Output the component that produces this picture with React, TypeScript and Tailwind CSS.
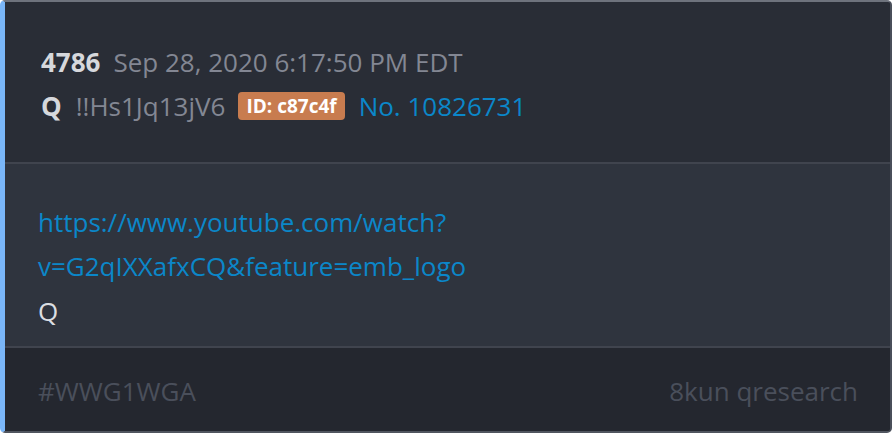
import React from "react";

export default function App() {
  return (
    <div className="w-[894px] h-[434px] bg-white" style={{ fontFamily: '"Open Sans", "Noto Sans", sans-serif' }}>
      <div className="w-[892px] h-[433px] flex flex-col rounded-[5px] overflow-hidden border-t-2 border-t-[#6e737d] border-r-2 border-r-[#4a4f5a] border-b-2 border-b-[#50555f] border-l-[5px] border-l-[#7ab6f8] bg-[#292d36]">
        <div className="bg-[#292d36] pl-[36px] pr-[32px] pt-[38px] pb-[34px] text-[26px] leading-[44px]">
          <div className="flex items-baseline">
            <span className="font-bold text-[#d6d8dc]">4786</span>
            <span className="ml-[13px] text-[#838793]">Sep 28, 2020 6:17:50 PM EDT</span>
          </div>
          <div className="flex items-center">
            <span className="font-bold text-[#d6d8dc]">Q</span>
            <span className="ml-[14px] text-[#838793]">!!Hs1Jq13jV6</span>
            <span className="ml-[13px] bg-[#c87c4f] text-white font-bold text-[19px] leading-[28px] px-[8px] rounded-[4px]">ID: c87c4f</span>
            <span className="ml-[14px] text-[#0b87c9]">No. 10826731</span>
          </div>
        </div>
        <div className="h-[2px] bg-[#40444e]" />
        <div className="bg-[#2f343e] pl-[33px] pr-[32px] pt-[36px] pb-[13px] text-[26px] leading-[44.5px] flex-1">
          <div className="text-[#0b87c9]">https://www.youtube.com/watch?</div>
          <div className="text-[#0b87c9]">v=G2qIXXafxCQ&amp;feature=emb_logo</div>
          <div className="text-[#dcdee2]">Q</div>
        </div>
        <div className="h-[2px] bg-[#40444e]" />
        <div className="bg-[#24272f] h-[84px] pl-[33px] pr-[32px] pt-[3px] flex items-center justify-between text-[26px] text-[#4a4f5b]">
          <span>#WWG1WGA</span>
          <span>8kun qresearch</span>
        </div>
      </div>
    </div>
  );
}
